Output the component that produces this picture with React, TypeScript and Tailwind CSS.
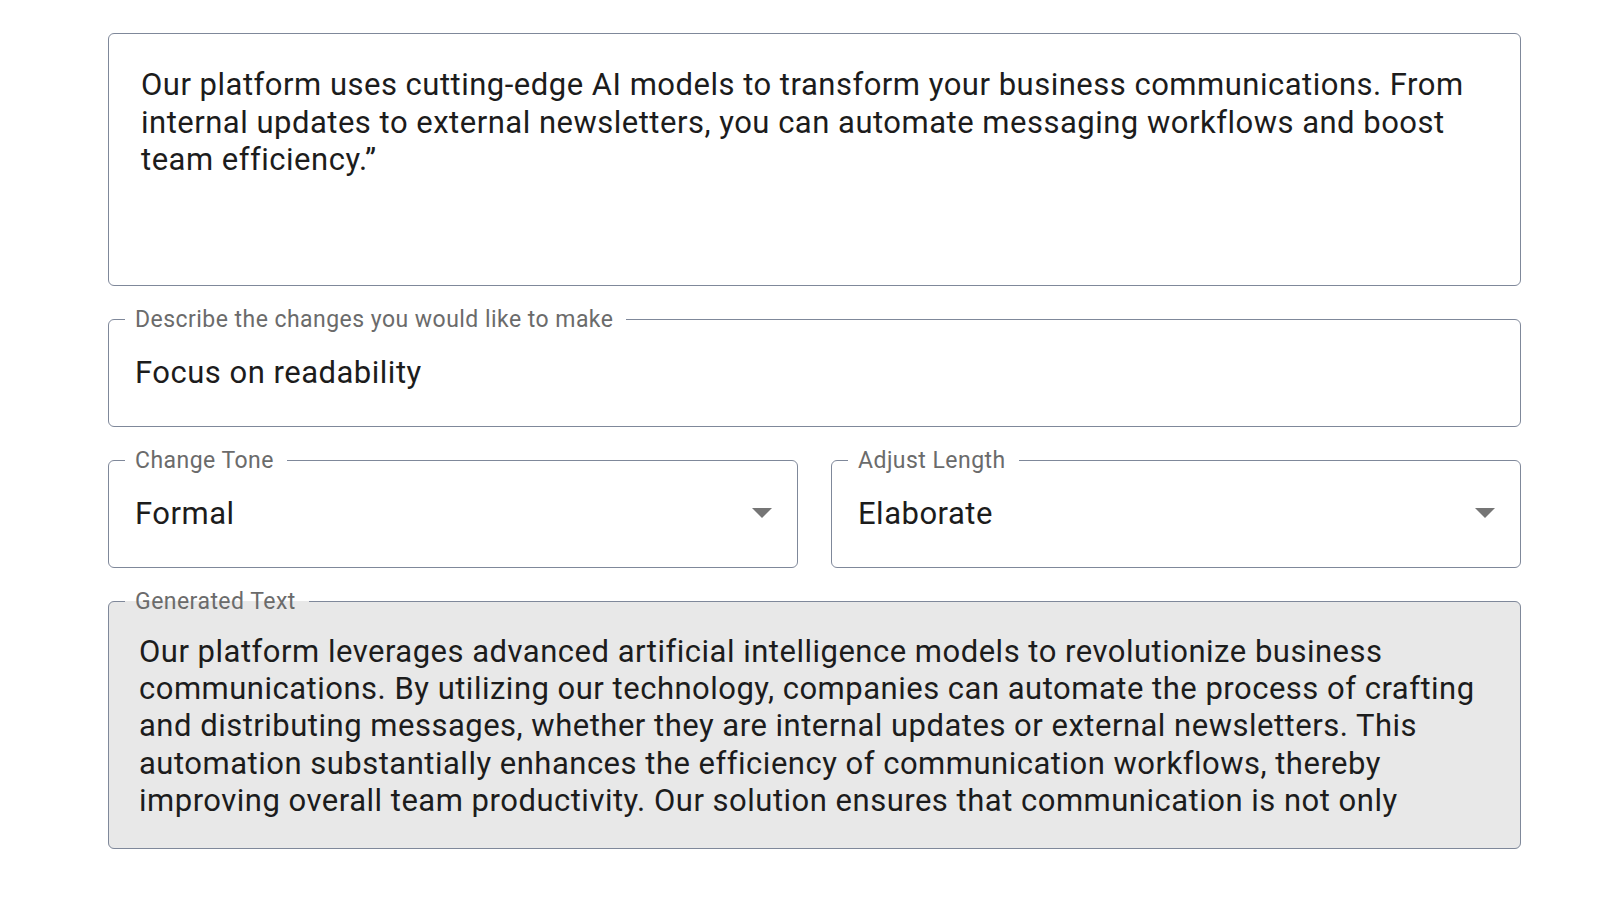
import React from 'react';

const font = { fontFamily: 'Roboto, "Noto Sans", Arial, sans-serif' };

function Caret() {
    return (
        <svg width="20" height="10" viewBox="0 0 20 10" className="shrink-0">
            <polygon points="0,0 20,0 10,10" fill="#757575" />
        </svg>
    );
}

function Outlined({ label, children, className = '', bg = '' }: { label: string; children: React.ReactNode; className?: string; bg?: string }) {
    return (
        <fieldset className={`min-w-0 border border-[#7f889a] rounded-md px-[16px] ${bg} ${className}`}>
            <legend className="pl-[10px] pr-[13px] text-[23px] leading-[28px] tracking-[0.46px] text-[#6b6b6b]">{label}</legend>
            {children}
        </fieldset>
    );
}

function Select({ label, value }: { label: string; value: string }) {
    return (
        <Outlined label={label} className="flex-1">
            <div className="flex items-center justify-between pl-[10px] pr-[9px] pt-[20px] pb-[35.5px]">
                <span className="text-[31px] leading-[37px] tracking-[0.5px] text-[#1c1c1c]">{value}</span>
                <Caret />
            </div>
        </Outlined>
    );
}

export default function App() {
    return (
        <div className="min-h-screen bg-white" style={font}>
            <div className="ml-[108px] w-[1413px] pt-[33px] flex flex-col gap-[19.5px]">
                <div className="border border-[#7f889a] rounded-md px-[32px] pt-[32px] pb-[32px]">
                    <p className="h-[187px] text-[31px] leading-[37.5px] tracking-[0.5px] text-[#1c1c1c]">
                        Our platform uses cutting-edge AI models to transform your business communications. From internal updates to external newsletters, you can automate messaging workflows and boost team efficiency.”
                    </p>
                </div>

                <Outlined label="Describe the changes you would like to make">
                    <div className="pl-[10px] pt-[20px] pb-[35.5px] text-[31px] leading-[37px] tracking-[0.5px] text-[#1c1c1c]">
                        Focus on readability
                    </div>
                </Outlined>

                <div className="flex gap-[33px]">
                    <Select label="Change Tone" value="Formal" />
                    <Select label="Adjust Length" value="Elaborate" />
                </div>

                <Outlined label="Generated Text" bg="bg-[#e8e8e8]">
                    <div className="pl-[14px] pr-[16px] pt-[17px] pb-[28px]">
                        <p className="h-[187px] overflow-hidden text-[31px] leading-[37.4px] tracking-[0.5px] text-[#1c1c1c]">
                            Our platform leverages advanced artificial intelligence models to revolutionize business communications. By utilizing our technology, companies can automate the process of crafting and distributing messages, whether they are internal updates or external newsletters. This automation substantially enhances the efficiency of communication workflows, thereby improving overall team productivity. Our solution ensures that communication is not only
                        </p>
                    </div>
                </Outlined>
            </div>
        </div>
    );
}
